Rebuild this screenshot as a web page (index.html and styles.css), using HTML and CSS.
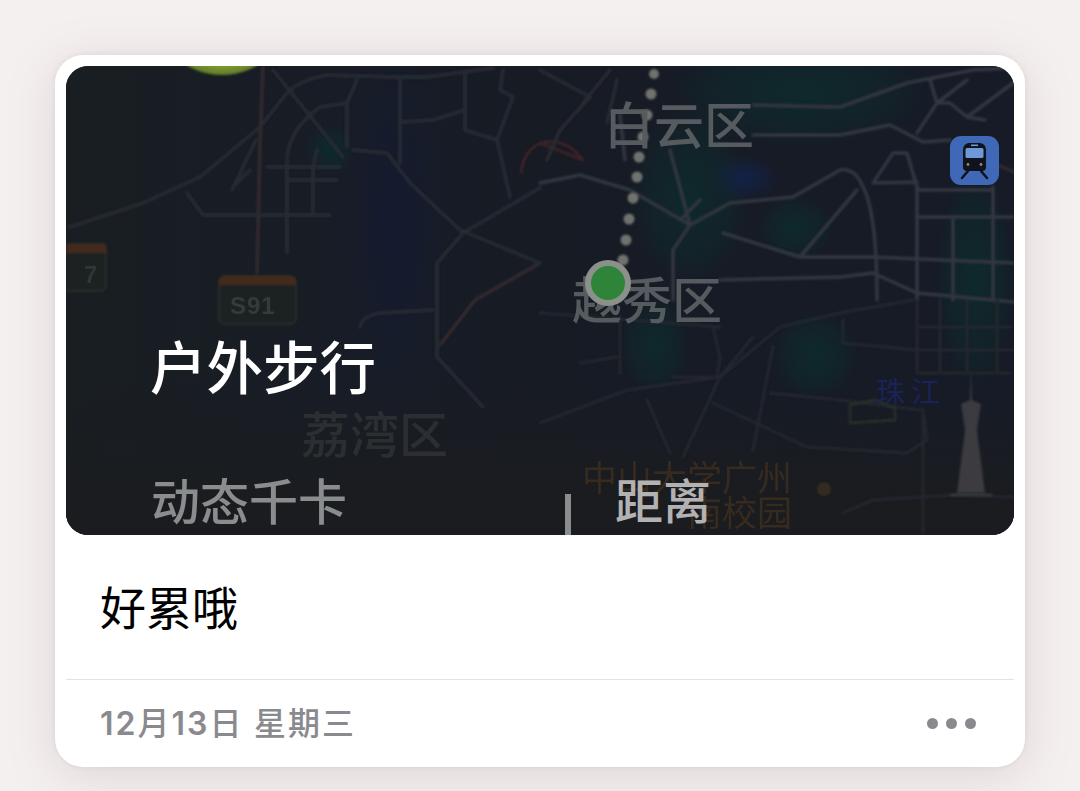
FILE: index.html
```html
<!DOCTYPE html>
<html lang="zh-CN">
<head>
<meta charset="utf-8">
<title>户外步行</title>
<link rel="stylesheet" href="styles.css">
</head>
<body>
<main class="card">
  <section class="map">
    <svg class="map-art" viewBox="66 66 948 469" xmlns="http://www.w3.org/2000/svg" aria-hidden="true">
      <defs>
        <linearGradient id="base" x1="0" y1="0" x2="1" y2="0">
          <stop offset="0" stop-color="#191e22"/>
          <stop offset=".3" stop-color="#181c26"/>
          <stop offset=".5" stop-color="#171b24"/>
          <stop offset="1" stop-color="#161b27"/>
        </linearGradient>
        <linearGradient id="fade" x1="0" y1="0" x2="0" y2="1">
          <stop offset="0" stop-color="#1a1c1f" stop-opacity="0"/>
          <stop offset=".7" stop-color="#1a1c1f" stop-opacity=".9"/>
          <stop offset="1" stop-color="#1a1c1f"/>
        </linearGradient>
        <radialGradient id="teal"><stop offset="0" stop-color="#0d2c2c" stop-opacity=".85"/><stop offset=".65" stop-color="#0f282b" stop-opacity=".6"/><stop offset="1" stop-color="#0f282b" stop-opacity="0"/></radialGradient>
        <radialGradient id="blue"><stop offset="0" stop-color="#13224c" stop-opacity=".9"/><stop offset="1" stop-color="#13224c" stop-opacity="0"/></radialGradient>
        <radialGradient id="navy"><stop offset="0" stop-color="#141b30"/><stop offset="1" stop-color="#141b30" stop-opacity="0"/></radialGradient>
        <radialGradient id="lime"><stop offset="0" stop-color="#7f9f2e"/><stop offset=".88" stop-color="#7a9a2e"/><stop offset="1" stop-color="#5f7a2c"/></radialGradient>
        <filter id="tiny"><feGaussianBlur stdDeviation="0.8"/></filter>
      </defs>
      <rect x="66" y="66" width="948" height="469" fill="url(#base)"/>
      <ellipse cx="395" cy="220" rx="55" ry="210" fill="url(#navy)"/>
      <ellipse cx="800" cy="92" rx="130" ry="55" fill="url(#teal)"/>
      <ellipse cx="690" cy="195" rx="60" ry="90" fill="url(#teal)"/>
      <ellipse cx="745" cy="178" rx="36" ry="24" fill="url(#blue)"/>
      <ellipse cx="795" cy="228" rx="38" ry="32" fill="url(#teal)"/>
      <ellipse cx="655" cy="345" rx="34" ry="50" fill="url(#teal)"/>
      <ellipse cx="815" cy="355" rx="42" ry="45" fill="url(#teal)"/>
      <ellipse cx="975" cy="280" rx="40" ry="110" fill="url(#teal)"/>
      <ellipse cx="330" cy="150" rx="24" ry="26" fill="url(#teal)"/>
      <rect x="66" y="380" width="948" height="155" fill="url(#fade)"/>
      <circle cx="222" cy="5" r="70" fill="url(#lime)" filter="url(#tiny)"/>
      <g filter="url(#tiny)" fill="none" stroke-linecap="round" stroke-linejoin="round">
        <g stroke="#33292d" stroke-width="3.500">
          <path d="M263 67L260 143L257 273"/>
          <path d="M540 263L475 300L440 345"/>
          <path d="M998 165L1014 172"/>
        </g>
        <g stroke="#432428" stroke-width="2.500">
          <path d="M521 172Q525 146 545 142Q570 140 582 160"/>
          <path d="M540 143L583 160"/>
        </g>
        <g stroke="#272b33" stroke-width="3.500">
          <path d="M70 227L143 203L200 177L260 127L287 93Q300 80 327 75L393 77H427L493 68"/>
          <path d="M273 70L327 137L343 157"/>
          <path d="M287 160Q288 130 320 107L347 103V147M357 80L347 103"/>
          <path d="M267 167H340M287 180H337M203 215H330M187 193L197 207L203 215"/>
          <path d="M287 160V253M313 167V215M317 150L313 167M235 185L250 170M232 190L256 140"/>
          <path d="M400 80V163M353 150L387 153L410 183L460 230L540 263"/>
          <path d="M403 122L433 120L465 110M465 73V130L497 140L513 97L500 90L503 70M497 140L510 197"/>
          <path d="M540 188L463 233L437 263V357L483 407M360 327Q362 316 380 313L433 310"/>
          <path d="M540 70L590 97L560 130L547 160M610 70L583 103M617 80L607 123"/>
        </g>
        <g stroke="#32363f" stroke-width="3.500">
          <path d="M753 105L840 107L907 83L973 70L1014 68"/>
          <path d="M753 135H840L890 125L923 142L950 140"/>
          <path d="M540 183L580 175L630 190L690 225L730 203L793 197L840 170Q855 168 862 185Q877 210 877 300"/>
          <path d="M690 225L673 250V300M723 233L800 257H873L1013 263M800 257L857 190"/>
          <path d="M917 187V300M917 190H993M917 217H1013M993 187V300M953 220V300"/>
          <path d="M873 183L893 153H907L917 187M873 183L917 182"/>
          <path d="M930 80L937 103L967 80M937 103H950L967 117L1013 83M937 103L917 133M967 117L985 120"/>
          <path d="M720 280L840 277L873 273L917 293L1014 302"/>
          <path d="M620 115L625 160M670 150L690 225M700 200L682 218"/>
        </g>
        <g stroke="#24272f" stroke-width="3">
          <path d="M540 313L720 327M620 317V373M713 327L720 357L717 377"/>
          <path d="M720 377L780 327L840 313L913 300M843 320V343L917 350H1013"/>
          <path d="M917 300V373M940 300V373M967 300V373M997 300V373M917 327H1010M917 373H1010"/>
          <path d="M673 377L720 377M580 363L617 357M540 423L627 390L720 377L753 337"/>
          <path d="M773 347L753 450M720 377L683 457M647 400L670 453"/>
          <path d="M770 393L840 400L920 410M713 403L807 447L907 453L927 440L923 410V533"/>
          <path d="M843 513L873 500L953 495L1013 497"/>
        </g>
        <path d="M850 405L875 400L895 408L895 420L850 423Z" stroke="#28332a" stroke-width="2.500"/>
      </g>
      <g fill="#6f726d" filter="url(#tiny)">
        <circle cx="654" cy="74" r="5"/><circle cx="651" cy="94" r="5.500"/><circle cx="647" cy="115" r="5.500"/>
        <circle cx="643" cy="137" r="5.500"/><circle cx="639" cy="157" r="5.500"/><circle cx="637" cy="177" r="5.500"/>
        <circle cx="633" cy="198" r="5.500"/><circle cx="629" cy="219" r="5.500"/><circle cx="626" cy="240" r="5.500"/>
        <circle cx="623" cy="260" r="5.500"/>
      </g>
      <g filter="url(#tiny)">
        <rect x="219" y="276" width="77" height="48" rx="6" fill="#1a2120" stroke="#252f2b" stroke-width="2"/>
        <path d="M219 282a6 6 0 0 1 6-6h65a6 6 0 0 1 6 6v3h-77Z" fill="#43291a"/>
        <rect x="60" y="244" width="46" height="47" rx="5" fill="#1a2120" stroke="#252f2b" stroke-width="2"/>
        <path d="M66 244h40v9H66Z" fill="#43291a"/>
        <path d="M970 400L971 368L972 400L981 404L977 430L985 493H957L965 430L961 404Z" fill="#3a3b41"/>
        <path d="M950 495H992" stroke="#3a3c40" stroke-width="2"/>
        <circle cx="824" cy="489" r="7" fill="#342c20"/>
      </g>
    </svg>
    <span class="label district label-baiyun">白云区</span>
    <span class="label district label-yuexiu">越秀区</span>
    <span class="label label-liwan">荔湾区</span>
    <span class="label label-river">珠江</span>
    <span class="label label-s91">S91</span>
    <span class="label label-seven">7</span>
    <span class="label label-campus">中山大学广州<br>南校园</span>
    <span class="pin"></span>
    <span class="metro">
      <svg viewBox="0 0 49 49" width="49" height="49" xmlns="http://www.w3.org/2000/svg" aria-hidden="true">
        <path d="M19 7h11q6 1 6 7v17q0 4-4 4H17q-4 0-4-4V14q0-6 6-7Z" fill="#10131c"/>
        <rect x="15.500" y="12" width="18" height="10" rx="1.500" fill="#6f98d6"/>
        <rect x="21" y="8.500" width="7" height="1.600" fill="#6f98d6"/>
        <circle cx="18" cy="28.500" r="1.400" fill="#8d8a6a"/><circle cx="31" cy="28.500" r="1.400" fill="#8d8a6a"/>
        <path d="M18 35L12 42M31 35L37 42" stroke="#10131c" stroke-width="2.500" stroke-linecap="round"/>
      </svg>
    </span>
    <h1 class="title">户外步行</h1>
    <div class="metric-name metric-cal">动态千卡</div>
    <div class="metric-divider"></div>
    <div class="metric-name metric-dist">距离</div>
  </section>
  <p class="note">好累哦</p>
  <footer class="foot">
    <time class="date"><b>12</b>月<b>13</b>日 星期三</time>
    <div class="more"><i></i><i></i><i></i></div>
  </footer>
</main>
</body>
</html>
```

FILE: styles.css
```css
* { box-sizing: border-box; }
html, body { margin: 0; height: 791px; overflow: hidden; }
body {
  background: #f5f0f0;
  padding: 55px;
  font-family: "Noto Sans CJK SC", "Noto Sans", sans-serif;
}
.card {
  width: 970px;
  height: 712px;
  padding: 11px 11px 0;
  background: #fff;
  border-radius: 28px;
  box-shadow: 0 0 5px rgba(120, 100, 100, .12), 0 8px 50px rgba(120, 90, 90, .18);
  display: flex;
  flex-direction: column;
}
.map {
  position: relative;
  height: 469px;
  flex: none;
  border-radius: 22px;
  overflow: hidden;
  background: #191d22;
}
.map-art { position: absolute; inset: 0; width: 948px; height: 469px; display: block; }
.label { position: absolute; line-height: 1; white-space: nowrap; filter: blur(.5px); }
.district { font-size: 50px; font-weight: 500; color: #565b5f; }
.label-baiyun { left: 538px; top: 31px; }
.label-yuexiu { left: 506px; top: 206px; }
.label-liwan { left: 235px; top: 341px; font-size: 49px; font-weight: 500; color: #2b2f32; }
.label-river { left: 810px; top: 310px; font-size: 29px; letter-spacing: 6px; color: #1a2358; }
.label-s91 { left: 164px; top: 226px; font: 700 24px "Liberation Sans", sans-serif; letter-spacing: 1px; color: #343b38; }
.label-seven { left: 18px; top: 195px; font: 700 24px "Liberation Sans", sans-serif; color: #2f3633; }
.label-campus { left: 516px; top: 392px; font-size: 35px; line-height: 35px; color: #372b1f; text-align: right; }
.pin {
  position: absolute;
  left: 519px;
  top: 194px;
  width: 46px;
  height: 46px;
  border-radius: 50%;
  border: 6px solid #8b908a;
  background: #2e8438;
}
.metro {
  position: absolute;
  left: 884px;
  top: 70px;
  width: 49px;
  height: 49px;
  border-radius: 11px;
  background: #3f69b6;
  display: flex;
  align-items: center;
  justify-content: center;
}
.title {
  position: absolute;
  left: 84px;
  top: 270px;
  margin: 0;
  font-size: 56.500px;
  line-height: 1;
  font-weight: 500;
  color: #fff;
  white-space: nowrap;
}
.metric-name { position: absolute; line-height: 1; white-space: nowrap; }
.metric-cal { left: 85px; top: 408px; font-size: 49px; font-weight: 500; color: #8a8d8e; }
.metric-dist { left: 549px; top: 408px; font-size: 48px; font-weight: 500; color: #b2b2b2; }
.metric-divider { position: absolute; left: 499px; top: 428px; width: 6px; height: 41px; background: #8b8e8e; }
.note {
  flex: 1;
  margin: 0;
  padding: 47px 0 0 34px;
  font-size: 46px;
  line-height: 46px;
  color: #000;
  border-bottom: 1px solid #e3e3e3;
}
.foot {
  flex: none;
  height: 87px;
  padding: 0 38px 0 34px;
  display: flex;
  align-items: center;
  justify-content: space-between;
}
.date {
  font-family: Inter, "Noto Sans CJK SC", sans-serif;
  font-size: 32px;
  font-weight: 500;
  letter-spacing: 2px;
  line-height: 1;
  color: #8a8a8e;
  white-space: nowrap;
}
.date b { font-weight: 600; }
.more { display: flex; gap: 8px; }
.more i { display: block; width: 11px; height: 11px; border-radius: 50%; background: #8a8a8e; }
```
